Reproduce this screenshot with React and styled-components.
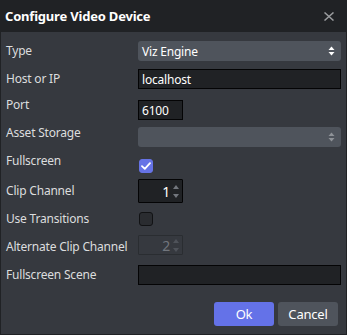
import React from "react";
import styled, { createGlobalStyle } from "styled-components";

const Global = createGlobalStyle`
  html, body { margin: 0; padding: 0; background: #36393f; }
  body { font-family: "Noto Sans", "Open Sans", sans-serif; }
  * { box-sizing: border-box; }
`;

const Dialog = styled.div`
  width: 347px;
  height: 335px;
  background: #36393f;
  border: 1px solid #202225;
  border-top: none;
  display: flex;
  flex-direction: column;
  color: #dcddde;
  font-size: 12px;
  letter-spacing: -0.2px;
`;

const Header = styled.div`
  height: 32px;
  background: #202225;
  display: flex;
  align-items: center;
  justify-content: space-between;
  padding: 0 12px 0 5px;
  margin: 0 -1px;
`;

const Title = styled.div`
  font-weight: 700;
  font-size: 13px;
  color: #ffffff;
  margin-top: -1px;
`;

const Close = styled.button`
  background: none;
  border: none;
  padding: 0;
  width: 12px;
  height: 12px;
  display: flex;
  align-items: center;
  justify-content: center;
  cursor: pointer;
`;

const Body = styled.div`
  display: flex;
  flex-direction: column;
  padding: 9px 5px 0 5px;
  flex: 1;
`;

const Row = styled.div`
  display: grid;
  grid-template-columns: 132px 1fr;
  align-items: center;
  height: ${(p) => p.$h || 20}px;
  margin-top: ${(p) => p.$mt || 0}px;
`;

const Label = styled.div`
  line-height: 16px;
  white-space: nowrap;
  margin-bottom: ${(p) => (p.$shift > 0 ? p.$shift * 2 : 0)}px;
  margin-top: ${(p) => (p.$shift < 0 ? -p.$shift * 2 : 0)}px;
`;

const SelectBox = styled.div`
  height: 20px;
  border-radius: 3px;
  background: #4f545c;
  display: flex;
  align-items: center;
  justify-content: space-between;
  padding: 0 6px 0 4px;
  color: ${(p) => (p.$disabled ? "#8e9297" : "#ffffff")};
`;

const TextInput = styled.div`
  height: 20px;
  width: ${(p) => (p.$w ? `${p.$w}px` : "100%")};
  background: #202225;
  border: 1px solid #040405;
  display: flex;
  align-items: center;
  padding: 0 3px;
  color: #ffffff;
`;

const Spin = styled.div`
  height: ${(p) => p.$h}px;
  width: 45px;
  background: ${(p) => (p.$disabled ? "#36393f" : "#202225")};
  border: 1px solid ${(p) => (p.$disabled ? "#2a2d31" : "#040405")};
  border-radius: 1px;
  display: flex;
  align-items: center;
  justify-content: flex-end;
  gap: 3px;
  padding: 0 3px 0 3px;
  font-size: 14px;
  color: ${(p) => (p.$disabled ? "#72767d" : "#ffffff")};
`;

const SpinArrows = styled.div`
  display: flex;
  flex-direction: column;
  gap: 5px;
`;

const CheckBox = styled.div`
  width: 14px;
  height: 14px;
  margin-left: 1px;
  border-radius: 3px;
  background: ${(p) => (p.$checked ? "#6673e6" : "#2a2c30")};
  border: 1px solid ${(p) => (p.$checked ? "#6673e6" : "#111214")};
  display: flex;
  align-items: center;
  justify-content: center;
`;

const Footer = styled.div`
  display: flex;
  justify-content: flex-end;
  gap: 4px;
  padding: 17px 3px 0 0;
`;

const Button = styled.button`
  width: 60px;
  height: 24px;
  border: none;
  border-radius: 3px;
  font-family: inherit;
  font-size: 13px;
  letter-spacing: -0.2px;
  color: #ffffff;
  background: ${(p) => (p.$primary ? "#6472e8" : "#4f545c")};
  cursor: pointer;
`;

const UpDown = ({ color }) => (
  <svg width="7" height="10" viewBox="0 0 7 10">
    <path d="M3.5 0.5 L6.5 4 L0.5 4 Z" fill={color} />
    <path d="M3.5 9.5 L6.5 6 L0.5 6 Z" fill={color} />
  </svg>
);

const Tri = ({ up, color }) => (
  <svg width="6" height="4" viewBox="0 0 6 4">
    <path d={up ? "M3 0 L6 4 L0 4 Z" : "M3 4 L6 0 L0 0 Z"} fill={color} />
  </svg>
);

const Check = () => (
  <svg width="10" height="8" viewBox="0 0 10 8">
    <path d="M1 4.2 L3.8 6.8 L9 1.2" stroke="#fff" strokeWidth="1.8" fill="none" strokeLinecap="round" strokeLinejoin="round" />
  </svg>
);

export default function App() {
  return (
    <>
      <Global />
      <Dialog>
        <Header>
          <Title>Configure Video Device</Title>
          <Close aria-label="close">
            <svg width="10" height="9" viewBox="0 0 10 9">
              <path d="M0.5 0.5 L9.5 8.5 M9.5 0.5 L0.5 8.5" stroke="#9a9c9f" strokeWidth="1.5" />
            </svg>
          </Close>
        </Header>
        <Body>
          <Row>
            <Label>Type</Label>
            <SelectBox>
              <span>Viz Engine</span>
              <UpDown color="#ffffff" />
            </SelectBox>
          </Row>
          <Row $mt={8}>
            <Label>Host or IP</Label>
            <TextInput>localhost</TextInput>
          </Row>
          <Row $mt={8}>
            <Label $shift={5}>Port</Label>
            <TextInput $w={45}>6100</TextInput>
          </Row>
          <Row $mt={8}>
            <Label $shift={4}>Asset Storage</Label>
            <SelectBox $disabled>
              <span />
              <UpDown color="#8e9297" />
            </SelectBox>
          </Row>
          <Row $mt={8}>
            <Label $shift={5}>Fullscreen</Label>
            <CheckBox $checked>
              <Check />
            </CheckBox>
          </Row>
          <Row $mt={6} $h={24}>
            <Label>Clip Channel</Label>
            <Spin $h={24}>
              <span>1</span>
              <SpinArrows>
                <Tri up color="#72767d" />
                <Tri color="#72767d" />
              </SpinArrows>
            </Spin>
          </Row>
          <Row $mt={6}>
            <Label>Use Transitions</Label>
            <CheckBox />
          </Row>
          <Row $mt={6}>
            <Label $shift={-2}>Alternate Clip Channel</Label>
            <Spin $h={20} $disabled>
              <span>2</span>
              <SpinArrows>
                <Tri up color="#4f535a" />
                <Tri color="#4f535a" />
              </SpinArrows>
            </Spin>
          </Row>
          <Row $mt={10}>
            <Label>Fullscreen Scene</Label>
            <TextInput />
          </Row>
          <Footer>
            <Button $primary>Ok</Button>
            <Button>Cancel</Button>
          </Footer>
        </Body>
      </Dialog>
    </>
  );
}
